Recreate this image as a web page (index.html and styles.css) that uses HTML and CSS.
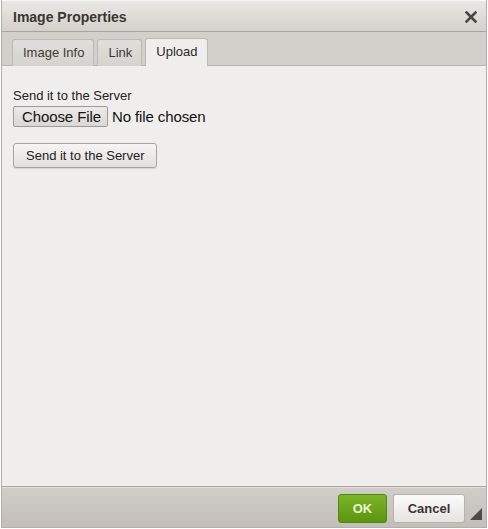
FILE: index.html
```html
<!DOCTYPE html>
<html>
<head>
<meta charset="utf-8">
<link rel="stylesheet" href="styles.css">
</head>
<body>
<div class="dialog">
  <div class="titlebar">
    <span class="title">Image Properties</span>
    <span class="close">
      <svg width="12" height="12" viewBox="0 0 12 12"><path d="M1.5 1.5 L10.5 10.5 M10.5 1.5 L1.5 10.5" stroke="#4a4645" stroke-width="2.6" stroke-linecap="square"/></svg>
    </span>
  </div>
  <div class="tabs">
    <div class="tab">Image Info</div>
    <div class="tab">Link</div>
    <div class="tab active">Upload</div>
  </div>
  <div class="content">
    <div class="label">Send it to the Server</div>
    <div class="filerow">
      <span class="choose">Choose File</span>
      <span class="nofile">No file chosen</span>
    </div>
    <div class="sendrow"><span class="send">Send it to the Server</span></div>
  </div>
  <div class="footer">
    <span class="btn ok">OK</span>
    <span class="btn cancel">Cancel</span>
    <span class="grip"></span>
  </div>
</div>
</body>
</html>
```
FILE: styles.css
```css
html, body {
  margin: 0;
  padding: 0;
  background: #ffffff;
}
body {
  font-family: "Liberation Sans", Arial, sans-serif;
  color: #222;
}
.dialog {
  width: 484px;
  height: 527px;
  margin-left: 1px;
  border: 1px solid #b2aea9;
  border-top: 0;
  display: flex;
  flex-direction: column;
  background: #efeeec;
  box-sizing: content-box;
}
.titlebar {
  height: 31px;
  border-bottom: 1px solid #a9a49e;
  background: linear-gradient(#ebe9e6, #d4d0cb);
  display: flex;
  align-items: center;
  justify-content: space-between;
  padding: 0 9px 0 11px;
  box-shadow: inset 0 1px 0 #f7f6f4;
}
.title {
  font-weight: bold;
  font-size: 14px;
  color: #3a3633;
  padding-top: 2px;
}
.close {
  display: flex;
  width: 12px;
  height: 12px;
  margin-top: 2px;
}
.tabs {
  height: 34px;
  background: #d3d0cc;
  border-bottom: 1px solid #b8b4af;
  display: flex;
  align-items: flex-end;
  padding-left: 10px;
  gap: 3px;
  box-sizing: border-box;
}
.tab {
  height: 27px;
  box-sizing: border-box;
  border: 1px solid #bcb8b3;
  border-bottom: 0;
  border-radius: 3px 3px 0 0;
  background: linear-gradient(#e0deda, #d6d3cf);
  font-size: 13px;
  color: #3d3a37;
  padding: 5px 9px 0 10px;
  margin-bottom: -1px;
}
.tab.active {
  background: #efeeec;
  height: 28px;
  margin-bottom: -1px;
  padding-top: 5px;
  color: #2d2a28;
}
.content {
  flex: 1;
  padding: 23px 12px 0 11px;
  font-size: 13px;
}
.label {
  color: #222;
  line-height: 14px;
}
.filerow {
  display: flex;
  align-items: center;
  margin-top: 3px;
  font-size: 15px;
  color: #111;
}
.choose {
  display: inline-block;
  height: 21px;
  line-height: 20px;
  box-sizing: border-box;
  padding: 0 6px 0 8px;
  border: 1px solid #9d9a97;
  border-radius: 2px;
  background: linear-gradient(#ebeae8, #d9d8d6);
  color: #151515;
  letter-spacing: -0.1px;
}
.nofile {
  margin-left: 4px;
  letter-spacing: -0.1px;
}
.sendrow {
  margin-top: 16px;
  display: flex;
}
.send {
  display: inline-block;
  height: 25px;
  line-height: 23px;
  box-sizing: border-box;
  padding: 0 11px 0 12px;
  border: 1px solid #a7a4a1;
  border-radius: 3px;
  background: linear-gradient(#f6f5f3, #e2e0dd);
  font-size: 13px;
  color: #222;
  box-shadow: 0 1px 1px rgba(0,0,0,0.1);
}
.footer {
  height: 40px;
  border-top: 1px solid #a9a49e;
  background: linear-gradient(#d1cdc9, #c3beb9);
  display: flex;
  align-items: center;
  justify-content: flex-end;
  padding-right: 21px;
  gap: 6px;
  position: relative;
  box-shadow: inset 0 1px 0 #e2dfdb;
}
.btn {
  height: 29px;
  box-sizing: border-box;
  line-height: 27px;
  border-radius: 3px;
  font-size: 13px;
  font-weight: bold;
  text-align: center;
  margin-top: 2px;
}
.ok {
  width: 49px;
  background: linear-gradient(#7db52a, #5a9510);
  border: 1px solid #4f8a0b;
  color: #e8f5d0;
}
.cancel {
  width: 72px;
  background: linear-gradient(#fbfbfa, #e6e4e1);
  border: 1px solid #b6b2ad;
  color: #3a3633;
}
.grip {
  position: absolute;
  right: 4px;
  bottom: 7px;
  width: 0;
  height: 0;
  border-left: 12px solid transparent;
  border-bottom: 12px solid #4e4a47;
}
```
